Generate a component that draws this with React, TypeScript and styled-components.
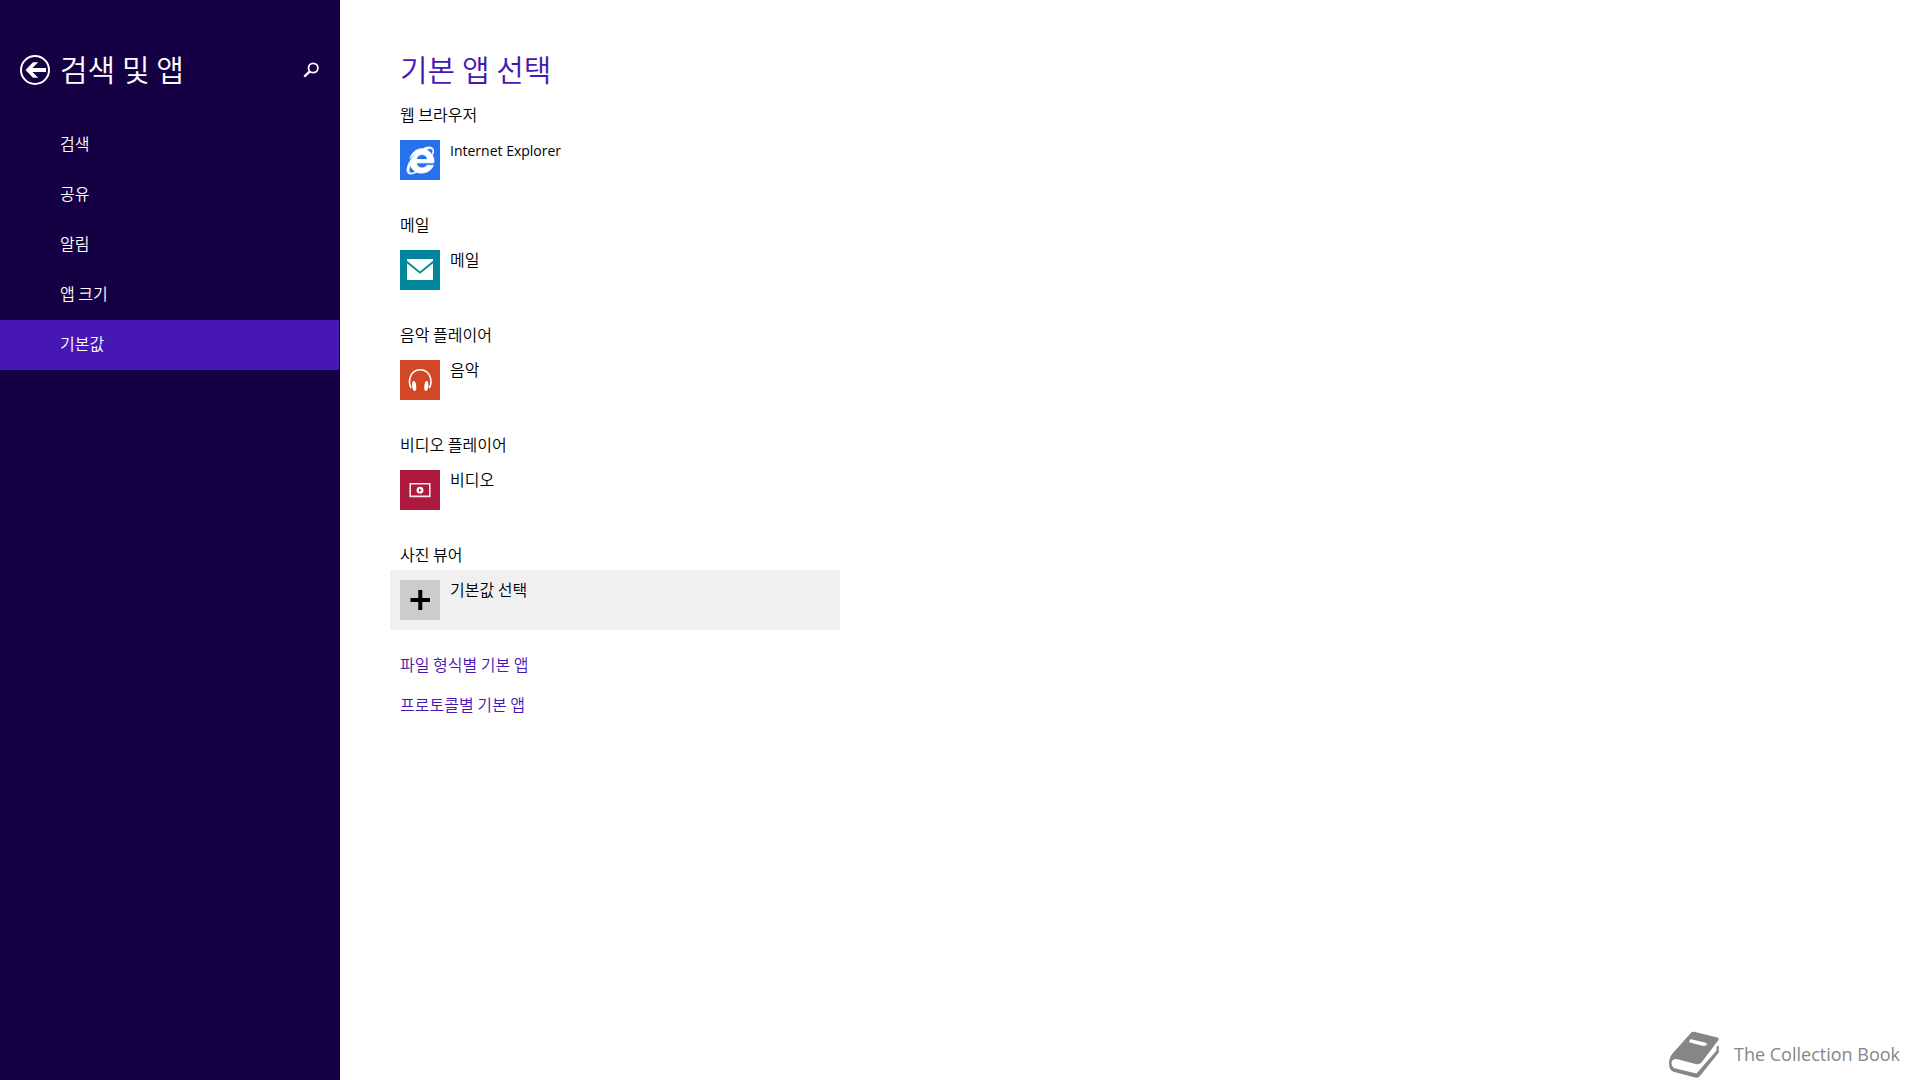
import React from "react";
import styled, { createGlobalStyle } from "styled-components";
import { FaInternetExplorer } from "react-icons/fa";

const GlobalStyle = createGlobalStyle`
  *, *::before, *::after { box-sizing: border-box; }
  body {
    margin: 0;
    background: #ffffff;
    color: #000000;
    font-family: "Noto Sans CJK KR", sans-serif;
    font-size: 16px;
    font-weight: 350;
    line-height: 20px;
  }
  h1, h2, ul { margin: 0; padding: 0; font-weight: inherit; }
  ul { list-style: none; }
  button { font: inherit; color: inherit; border: 0; background: none; padding: 0; cursor: pointer; }
  svg { display: block; }
`;

const Page = styled.div`
  display: grid;
  grid-template-columns: 340px 1fr;
  min-height: 100vh;
`;

const Sidebar = styled.aside`
  background: #160044;
  color: #ffffff;
  padding-top: 50px;
`;

const SidebarHeader = styled.header`
  display: flex;
  align-items: center;
  gap: 10px;
  height: 40px;
  padding: 0 20px;
`;

const Title = styled.h1`
  flex: 1;
  padding-bottom: 4px;
  font-size: 30px;
  line-height: 36px;
`;

const IconButton = styled.button`
  display: flex;
`;

const Nav = styled.nav`
  margin-top: 30px;
  padding-right: 1px;
`;

const NavLink = styled.a<{ $active?: boolean }>`
  display: flex;
  align-items: center;
  height: 50px;
  padding: 0 0 4px 60px;
  color: #ffffff;
  text-decoration: none;
  background: ${(p) => (p.$active ? "#4617b4" : "transparent")};
`;

const Main = styled.main`
  display: flex;
  flex-direction: column;
  padding: 50px 20px 0 50px;
`;

const PageTitle = styled.h1`
  padding-left: 10px;
  margin-bottom: 14px;
  color: #4617b4;
  font-size: 30px;
  line-height: 36px;
`;

const Sections = styled.div`
  display: flex;
  flex-direction: column;
  gap: 20px;
  max-width: 450px;
`;

const SectionTitle = styled.h2`
  padding: 0 0 2px 10px;
  font-size: 16px;
  line-height: 28px;
`;

const AppButton = styled.button<{ $hovered?: boolean }>`
  display: flex;
  gap: 10px;
  width: 100%;
  padding: 10px;
  text-align: left;
  background: ${(p) => (p.$hovered ? "#f0f0f0" : "transparent")};
`;

const Tile = styled.span<{ $color: string }>`
  display: grid;
  place-items: center;
  width: 40px;
  height: 40px;
  background: ${(p) => p.$color};
  color: #ffffff;
`;

const AppName = styled.span<{ $latin?: boolean }>`
  font-family: ${(p) => (p.$latin ? '"Open Sans", sans-serif' : "inherit")};
  font-size: ${(p) => (p.$latin ? "14px" : "16px")};
  font-weight: ${(p) => (p.$latin ? 400 : 350)};
  line-height: ${(p) => (p.$latin ? "22px" : "18px")};
`;

const Links = styled.ul`
  margin-top: 14px;
  padding-left: 10px;
  line-height: 40px;
`;

const TextLink = styled.a`
  color: #4617b4;
  text-decoration: none;
`;

const Credit = styled.footer`
  display: flex;
  align-items: center;
  align-self: flex-end;
  gap: 14px;
  margin-top: auto;
  padding-bottom: 1px;
  color: #868686;
  font-family: "Open Sans", sans-serif;
  font-size: 18px;
  font-weight: 400;
`;

const CreditName = styled.span`
  padding-bottom: 2px;
  line-height: 46px;
`;

const BackIcon = () => (
  <svg width="30" height="30" viewBox="0 0 30 30" aria-hidden="true">
    <circle cx="15" cy="15" r="14" fill="none" stroke="#fff" strokeWidth="2" />
    <path fill="#fff" d="M5.5 15 13 7.2h5.200L12.400 13.100H26v3.800H12.400L18.200 22.800H13z" />
  </svg>
);

const SearchIcon = () => (
  <svg width="18" height="18" viewBox="0 0 18 18" fill="none" stroke="#fff" aria-hidden="true">
    <circle cx="11.2" cy="7" r="4.7" strokeWidth="1.8" />
    <path d="M7.8 10.4 2.3 15.6" strokeWidth="2.4" />
  </svg>
);

const BrowserIcon = styled(FaInternetExplorer)`
  width: 27px;
  height: 27px;
  overflow: visible;
  stroke: currentColor;
  stroke-width: 16px;
`;

const MailIcon = () => (
  <svg width="40" height="40" viewBox="0 0 40 40" fill="#fff" aria-hidden="true">
    <path d="M7 9h26v1.8L20 21.4 7 10.8z" />
    <path d="M7 13.2 20 23.8l13-10.6V30H7z" />
  </svg>
);

const MusicIcon = () => (
  <svg width="40" height="40" viewBox="0 0 40 40" aria-hidden="true">
    <path d="M11.2 28C9.200 24.500 9 21 10.200 17.500 11.800 12.600 15.500 9.800 20.200 9.800s8.500 2.800 10.100 7.700C31.500 21 31.300 24.500 29.300 28" fill="none" stroke="#fff" strokeWidth="1.600" />
    <ellipse cx="14.200" cy="26" rx="2" ry="5" transform="rotate(-6 14.200 26)" fill="#fff" />
    <ellipse cx="26.300" cy="26" rx="2" ry="5" transform="rotate(6 26.300 26)" fill="#fff" />
  </svg>
);

const VideoIcon = () => (
  <svg width="40" height="40" viewBox="0 0 40 40" aria-hidden="true">
    <path d="M10.200 13.800h19.600v12.600H10.200z" fill="none" stroke="#fbe3ea" strokeWidth="1.600" />
    <circle cx="20" cy="20.200" r="3.400" fill="#fff" />
    <path d="M19 18.400v3.600l2.800-1.800z" fill="#ae193e" />
  </svg>
);

const PlusIcon = () => (
  <svg width="40" height="40" viewBox="0 0 40 40" aria-hidden="true">
    <path d="M10.500 20h19.500M20.300 10v20" stroke="#000" strokeWidth="4" />
  </svg>
);

const BookIcon = () => (
  <svg width="52" height="48" viewBox="0 0 52 48" aria-hidden="true">
    <path fill="#868686" fillRule="evenodd" d="M23.500 1.200Q24.600.4 26 .8L49.500 6.600Q51.500 7.200 50.400 9L33.500 31.500Q31.500 33.800 28.500 33.200L9.500 28.200Q5 27.200 3.600 31 3 35.500 6.500 37.300L28.500 42.600 48.600 19.500V15.800L50.800 14.500V21.500L31.500 45.500Q30 47.200 28 46.700L5.500 40.800Q.8 38.500 1 32.500 1 27 4.500 22.500zM23.300 8.300Q21.200 8.300 21.300 10.400 21.400 11.500 23 11.800L34.500 14.800Q37.500 15.400 38.800 13.800 39.400 12.300 37.500 11.800z" />
  </svg>
);

const navItems = ["검색", "공유", "알림", "앱 크기", "기본값"];

const sections = [
  { title: "웹 브라우저", app: "Internet Explorer", color: "#2672ec", icon: <BrowserIcon />, latin: true },
  { title: "메일", app: "메일", color: "#00859b", icon: <MailIcon /> },
  { title: "음악 플레이어", app: "음악", color: "#d24726", icon: <MusicIcon /> },
  { title: "비디오 플레이어", app: "비디오", color: "#ae193e", icon: <VideoIcon /> },
  { title: "사진 뷰어", app: "기본값 선택", color: "#cccccc", icon: <PlusIcon />, hovered: true },
];

export default function App() {
  return (
    <>
      <GlobalStyle />
      <Page>
        <Sidebar>
          <SidebarHeader>
            <IconButton aria-label="뒤로"><BackIcon /></IconButton>
            <Title>검색 및 앱</Title>
            <IconButton aria-label="설정 검색"><SearchIcon /></IconButton>
          </SidebarHeader>
          <Nav>
            <ul>
              {navItems.map((item) => (
                <li key={item}>
                  <NavLink href="#" $active={item === "기본값"} aria-current={item === "기본값" ? "page" : undefined}>
                    {item}
                  </NavLink>
                </li>
              ))}
            </ul>
          </Nav>
        </Sidebar>
        <Main>
          <PageTitle>기본 앱 선택</PageTitle>
          <Sections>
            {sections.map((s) => (
              <section key={s.title}>
                <SectionTitle>{s.title}</SectionTitle>
                <AppButton $hovered={s.hovered}>
                  <Tile $color={s.color}>{s.icon}</Tile>
                  <AppName $latin={s.latin}>{s.app}</AppName>
                </AppButton>
              </section>
            ))}
          </Sections>
          <Links>
            <li><TextLink href="#">파일 형식별 기본 앱</TextLink></li>
            <li><TextLink href="#">프로토콜별 기본 앱</TextLink></li>
          </Links>
          <Credit>
            <BookIcon />
            <CreditName>The Collection Book</CreditName>
          </Credit>
        </Main>
      </Page>
    </>
  );
}
